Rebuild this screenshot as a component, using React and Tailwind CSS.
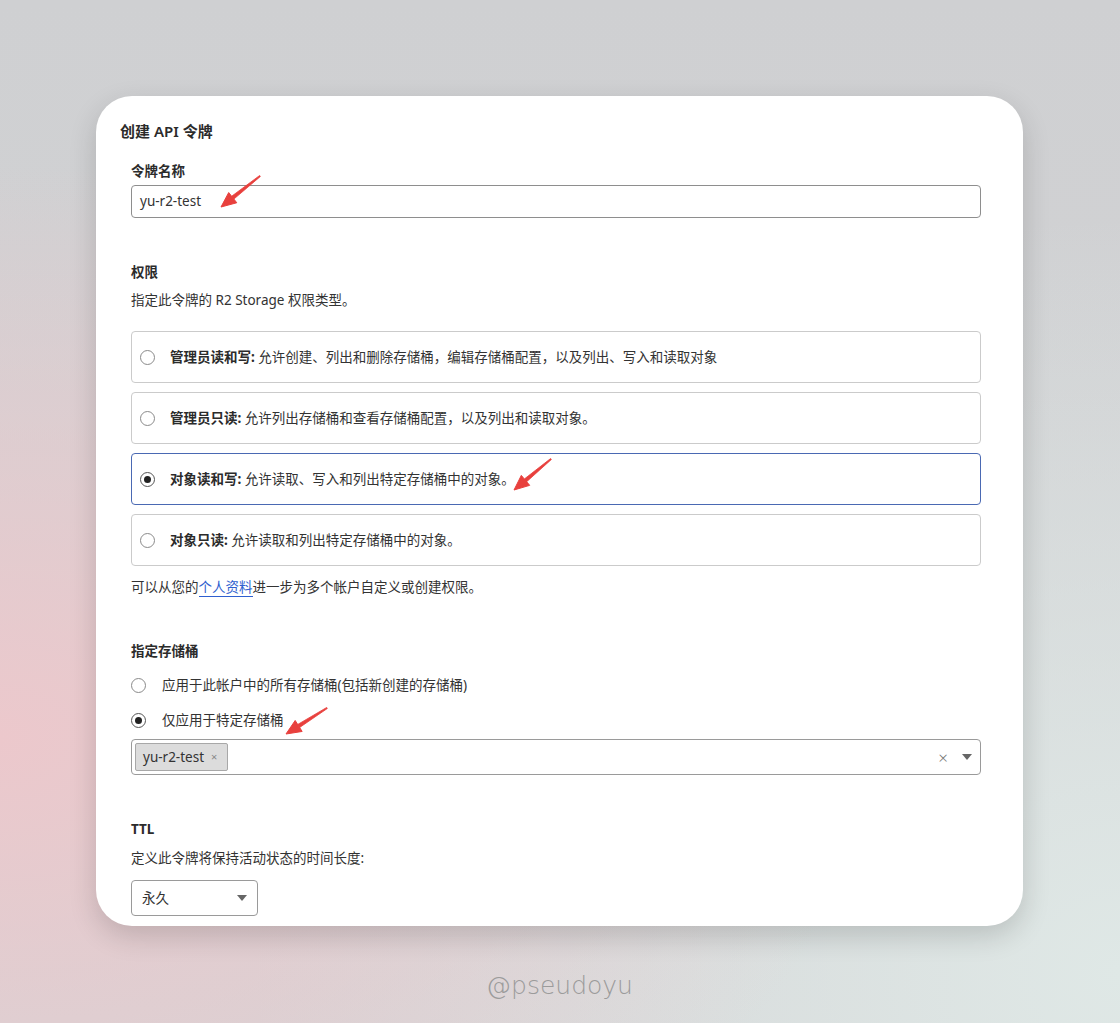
import React from 'react';

const font = { fontFamily: '"Noto Sans", "Noto Sans CJK SC", sans-serif' };

// red annotation arrow, drawn from tail to tip
const Arrow = ({ from, to }) => {
  const dx = to[0] - from[0];
  const dy = to[1] - from[1];
  const len = Math.hypot(dx, dy);
  const ux = dx / len;
  const uy = dy / len;
  const bx = to[0] - ux * 15;
  const by = to[1] - uy * 15;
  const px = -uy;
  const py = ux;
  const head = `${to[0]},${to[1]} ${bx + px * 6.5},${by + py * 6.5} ${bx - px * 6.5},${by - py * 6.5}`;
  const shaft = `${from[0] + px * 0.6},${from[1] + py * 0.6} ${from[0] - px * 0.6},${from[1] - py * 0.6} ${bx - px * 1.8},${by - py * 1.8} ${bx + px * 1.8},${by + py * 1.8}`;
  return (
    <g fill="#e8403d">
      <polygon points={shaft} strokeLinejoin="round" stroke="#e8403d" strokeWidth="0.8" />
      <polygon points={head} strokeLinejoin="round" stroke="#e8403d" strokeWidth="1" />
    </g>
  );
};

const Radio = ({ checked }) => (
  <span
    className={
      checked
        ? 'flex h-[15px] w-[15px] shrink-0 items-center justify-center rounded-full border border-[#555] bg-white'
        : 'flex h-[15px] w-[15px] shrink-0 items-center justify-center rounded-full border border-[#8a8a8a] bg-white'
    }
  >
    {checked && <span className="h-[7px] w-[7px] rounded-full bg-[#222]" />}
  </span>
);

const Caret = () => (
  <svg width="10" height="6" viewBox="0 0 10 6">
    <path d="M0 0h10L5 6z" fill="#666" />
  </svg>
);

const options = [
  { title: '管理员读和写:', desc: '允许创建、列出和删除存储桶，编辑存储桶配置，以及列出、写入和读取对象' },
  { title: '管理员只读:', desc: '允许列出存储桶和查看存储桶配置，以及列出和读取对象。' },
  { title: '对象读和写:', desc: '允许读取、写入和列出特定存储桶中的对象。', checked: true },
  { title: '对象只读:', desc: '允许读取和列出特定存储桶中的对象。' },
];

export default function App() {
  return (
    <div
      className="min-h-[1023px] w-full pl-[96px] pt-[96px] bg-[radial-gradient(ellipse_at_0%_72%,#ecc8cc_0%,rgba(236,200,204,0)_55%),radial-gradient(ellipse_at_100%_95%,#dfe8e6_0%,rgba(223,232,230,0)_55%),linear-gradient(180deg,#cfd0d2,#d4d4d6)]"
      style={font}
    >
      <div className="relative h-[830px] w-[927px] overflow-hidden rounded-[36px] bg-white pb-[10px] text-[13.5px] text-[#333] shadow-[0_10px_28px_rgba(0,0,0,0.16)]">
        <h1 className="pl-[24px] pt-[24px] text-[15px] font-semibold leading-[22px] text-[#2b2b2b]">创建 API 令牌</h1>

        <div className="pl-[35px] pr-[42px]">
          <div className="mt-[19px] font-bold leading-5 text-[#2b2b2b]">令牌名称</div>
          <div className="mt-[4px] flex h-[33px] items-center rounded-[4px] border border-[#8e8e8e] px-[8px] text-[#333]">
            yu-r2-test
          </div>

          <div className="mt-[44px] font-bold leading-5 text-[#2b2b2b]">权限</div>
          <div className="mt-[8px] leading-5">指定此令牌的 R2 Storage 权限类型。</div>

          <div className="mt-[21px] flex flex-col gap-[9px]">
            {options.map((o) => (
              <div
                key={o.title}
                className={
                  o.checked
                    ? 'flex h-[52px] items-center gap-[15px] rounded-[4px] border border-[#4a69b3] pl-[8px]'
                    : 'flex h-[52px] items-center gap-[15px] rounded-[4px] border border-[#cbcbcb] pl-[8px]'
                }
              >
                <Radio checked={o.checked} />
                <span className="leading-5">
                  <b className="font-bold text-[#2b2b2b]">{o.title}</b> {o.desc}
                </span>
              </div>
            ))}
          </div>

          <div className="mt-[11px] leading-5">
            可以从您的
            <span className="border-b border-[#2f5fcf] text-[#2f5fcf]">个人资料</span>
            进一步为多个帐户自定义或创建权限。
          </div>

          <div className="mt-[44px] font-bold leading-5 text-[#2b2b2b]">指定存储桶</div>
          <div className="mt-[14px] flex items-center gap-[16px] leading-5">
            <Radio />
            <span>应用于此帐户中的所有存储桶(包括新创建的存储桶)</span>
          </div>
          <div className="mt-[15px] flex items-center gap-[16px] leading-5">
            <Radio checked />
            <span>仅应用于特定存储桶</span>
          </div>
          <div className="mt-[9px] flex h-[36px] items-center rounded-[4px] border border-[#9a9a9a] pl-[3px] pr-[8px]">
            <span className="flex h-[28px] w-[93px] items-center gap-[7px] rounded-[2px] border border-[#a8a8a8] bg-[#dcdcdc] pl-[7px] text-[#333]">
              yu-r2-test
              <span className="text-[11px] text-[#888]">×</span>
            </span>
            <span className="ml-auto mr-[14px] text-[17px] font-light leading-none text-[#777]">×</span>
            <Caret />
          </div>

          <div className="mt-[44px] font-bold leading-5 text-[#2b2b2b]">TTL</div>
          <div className="mt-[9px] leading-5">定义此令牌将保持活动状态的时间长度:</div>
          <div className="mt-[12px] flex h-[36px] w-[127px] items-center justify-between rounded-[4px] border border-[#9a9a9a] pl-[10px] pr-[10px]">
            <span>永久</span>
            <Caret />
          </div>
        </div>

        <svg className="pointer-events-none absolute inset-0" width="927" height="830">
          <Arrow from={[164, 80]} to={[125, 111]} />
          <Arrow from={[455, 363]} to={[418, 394]} />
          <Arrow from={[231, 612]} to={[190, 638]} />
        </svg>
      </div>

      <div
        className="mt-[41px] w-[927px] text-center text-[25px] font-extralight text-[#9b9b9b]"
        style={{ fontFamily: '"DejaVu Sans", sans-serif' }}
      >
        @pseudoyu
      </div>
    </div>
  );
}
